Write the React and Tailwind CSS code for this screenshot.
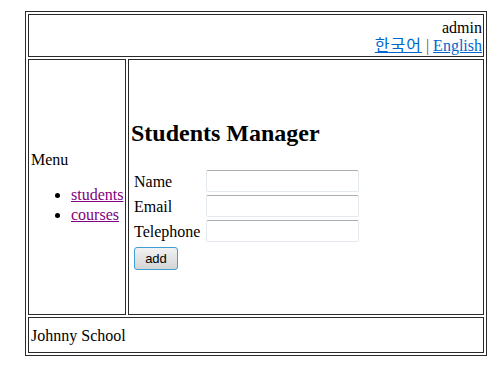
export default function App() {
  const serif = "font-['Liberation_Serif','Times_New_Roman',serif]"

  return (
    <div className={`min-h-screen bg-white text-black text-[16px] ${serif}`}>
      <div className="pt-[11px] pl-[25px]">
        <div className="w-[462px] h-[345px] border border-[#2a2a2a] p-[2px] flex flex-col gap-[2px]">
          {/* header */}
          <div className="h-[43px] shrink-0 border border-[#2a2a2a] px-px pt-[5px] text-right">
            <div className="leading-[15px]">admin</div>
            <div className="leading-[19px]">
              <a href="#" className="text-[#0066cc] underline tracking-[1px] font-['Noto_Sans_CJK_KR',sans-serif] text-[16px]">
                한국어
              </a>{' '}
              <span className="text-[#7a4545]">|</span>{' '}
              <a href="#" className="text-[#0066cc] underline">
                English
              </a>
            </div>
          </div>

          {/* middle */}
          <div className="h-[256px] shrink-0 flex gap-[2px]">
            <div className="w-[98px] shrink-0 border border-[#2a2a2a] pl-[2px] pt-[90px]">
              <div className="leading-[19px]">Menu</div>
              <ul className="list-disc pl-[40px] mt-[16px] leading-[20px]">
                <li>
                  <a href="#" className="text-[#800080] underline">students</a>
                </li>
                <li>
                  <a href="#" className="text-[#800080] underline">courses</a>
                </li>
              </ul>
            </div>

            <div className="flex-1 border border-[#2a2a2a] pl-[2px] pt-[59px]">
              <h2 className="text-[24px] font-bold leading-[28px]">Students Manager</h2>
              <div className="mt-[23px] pl-[3px] flex flex-col gap-[3px]">
                {['Name', 'Email', 'Telephone'].map((label) => (
                  <div key={label} className="flex items-center h-[22px]">
                    <span className="w-[72px] leading-[19px]">{label}</span>
                    <input
                      type="text"
                      className="w-[153px] h-[22px] bg-white border border-[#e3e9ef] border-t-[#abadb3] rounded-[2px] outline-none"
                    />
                  </div>
                ))}
                <div className="pt-[1px]">
                  <button className="w-[44px] h-[23px] rounded-[3px] border border-[#3c9fd6] bg-gradient-to-b from-[#f2f2f2] to-[#d4d4d4] text-[13px] leading-[19px] text-black font-['Liberation_Sans',Arial,sans-serif]">
                    add
                  </button>
                </div>
              </div>
            </div>
          </div>

          {/* footer */}
          <div className="h-[36px] shrink-0 border border-[#2a2a2a] pl-[2px] flex items-center">
            <span className="leading-[19px]">Johnny School</span>
          </div>
        </div>
      </div>
    </div>
  )
}
